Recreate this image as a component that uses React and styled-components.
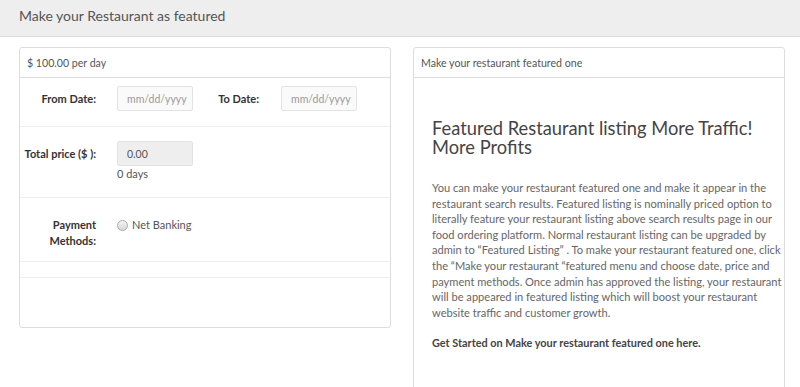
import React from 'react';
import styled, { createGlobalStyle } from 'styled-components';

const GlobalStyle = createGlobalStyle`
  html, body {
    margin: 0;
    padding: 0;
    background: #fff;
    font-family: Lato, "Open Sans", sans-serif;
    color: #555;
  }
`;

const infoLines = [
  'You can make your restaurant featured one and make it appear in the',
  'restaurant search results. Featured listing is nominally priced option to',
  'literally feature your restaurant listing above search results page in our',
  'food ordering platform. Normal restaurant listing can be upgraded by',
  'admin to “Featured Listing” . To make your restaurant featured one, click',
  'the “Make your restaurant “featured menu and choose date, price and',
  'payment methods. Once admin has approved the listing, your restaurant',
  'will be appeared in featured listing which will boost your restaurant',
  'website traffic and customer growth.',
];

const App = () => {
  return (
    <Page>
      <GlobalStyle />
      <TopBar>
        <h1>Make your Restaurant as featured</h1>
      </TopBar>
      <Content>
        <Card>
          <CardHeader>$ 100.00 per day</CardHeader>
          <FormRow pad="8px 0 15px">
            <Label w={76} mr={21}>From Date:</Label>
            <Input placeholder="mm/dd/yyyy" />
            <Label w={66} mr={22}>To Date:</Label>
            <Input placeholder="mm/dd/yyyy" />
          </FormRow>
          <FormRow pad="14px 0 16px">
            <Label w={76} mr={21}>Total price ($ ):</Label>
            <Field>
              <Input value="0.00" readOnly disabled />
              <Hint>0 days</Hint>
            </Field>
          </FormRow>
          <FormRow pad="19px 0 12px">
            <Label w={76} mr={21} multi>
              Payment
              <br />
              Methods:
            </Label>
            <Radio>
              <span className="dot" />
              Net Banking
            </Radio>
          </FormRow>
          <FormRow pad="0" h={16} />
          <CardFoot />
        </Card>

        <Card>
          <CardHeader>Make your restaurant featured one</CardHeader>
          <InfoBody>
            <h2>
              Featured Restaurant listing More Traffic!
              <br />
              More Profits
            </h2>
            <p>
              {infoLines.map((l) => (
                <span key={l}>{l}</span>
              ))}
            </p>
            <strong>Get Started on Make your restaurant featured one here.</strong>
          </InfoBody>
        </Card>
      </Content>
    </Page>
  );
};

export default App;

const Page = styled.div`
  width: 800px;
  height: 387px;
  overflow: hidden;
`;

const TopBar = styled.div`
  height: 37px;
  box-sizing: border-box;
  background: #eeeeee;
  border-bottom: 1px solid #dcdcdc;
  display: flex;
  align-items: center;
  padding: 0 0 5px 19px;
  h1 {
    margin: 0;
    font-size: 14px;
    font-weight: 400;
    color: #555;
  }
`;

const Content = styled.div`
  display: flex;
  align-items: flex-start;
  gap: 22px;
  padding: 10px 0 0 19px;
`;

const Card = styled.div`
  width: 370px;
  border: 1px solid #ddd;
  border-radius: 3px;
  background: #fff;
  flex-shrink: 0;
`;

const CardHeader = styled.div`
  height: 29px;
  display: flex;
  align-items: center;
  padding-left: 7px;
  font-size: 10.6px;
  color: #555;
  border-bottom: 1px solid #ddd;
`;

const FormRow = styled.div`
  display: flex;
  align-items: flex-start;
  padding: ${(p) => p.pad};
  height: ${(p) => (p.h ? `${p.h}px` : 'auto')};
  box-sizing: border-box;
  border-bottom: 1px solid #eee;
`;

const Label = styled.label`
  width: ${(p) => p.w}px;
  margin-right: ${(p) => p.mr}px;
  text-align: right;
  font-size: 11px;
  font-weight: 700;
  color: #333;
  line-height: ${(p) => (p.multi ? '16px' : '25px')};
  flex-shrink: 0;
`;

const Input = styled.input`
  width: 76px;
  height: 25px;
  box-sizing: border-box;
  border: 1px solid #e3e3e3;
  border-radius: 2px;
  background: ${(p) => (p.disabled ? '#eeeeee' : '#fafafa')};
  font-family: inherit;
  font-size: 10.5px;
  color: #555;
  padding: 0 0 0 9px;
  &::placeholder {
    color: #999;
  }
`;

const Field = styled.div`
  display: flex;
  flex-direction: column;
`;

const Hint = styled.span`
  font-size: 11px;
  color: #555;
  margin-top: 1px;
  line-height: 14px;
`;

const Radio = styled.div`
  display: flex;
  align-items: center;
  font-size: 11px;
  color: #555;
  line-height: 16px;
  .dot {
    width: 9px;
    height: 9px;
    border-radius: 50%;
    border: 1px solid #aaa;
    background: linear-gradient(#f4f4f4, #d6d6d6);
    margin-right: 4px;
  }
`;

const CardFoot = styled.div`
  height: 49px;
`;

const InfoBody = styled.div`
  padding: 41px 10px 40px 18px;
  h2 {
    margin: 0 0 23px;
    font-size: 18.3px;
    font-weight: 400;
    line-height: 19px;
    color: #444;
  }
  p {
    margin: 0 0 11px;
    font-size: 11.1px;
    line-height: 15.6px;
    color: #666;
    span {
      display: block;
      white-space: nowrap;
    }
  }
  strong {
    font-size: 10.9px;
    color: #444;
  }
`;
